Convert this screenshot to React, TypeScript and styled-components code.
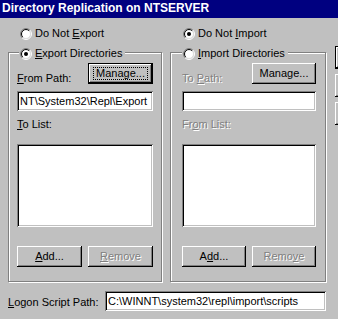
import React from "react";
import styled, { createGlobalStyle, css } from "styled-components";

const Global = createGlobalStyle`
  *, *::before, *::after { box-sizing: border-box; }
  html, body { margin: 0; padding: 0; background: #c0c0c0; overflow: hidden; }
  body {
    font-family: "Liberation Sans", Arial, sans-serif;
    font-size: 11px;
    color: #000;
  }
`;

const Window = styled.div`
  width: 338px;
  height: 319px;
  overflow: hidden;
  background: #c0c0c0;
  display: flex;
  flex-direction: column;
`;

const TitleBar = styled.div`
  flex: none;
  height: 18px;
  background: #000080;
  color: #fff;
  font-weight: bold;
  font-size: 12px;
  line-height: 17px;
  padding-left: 2px;
  white-space: nowrap;
`;

const Body = styled.div`
  display: flex;
  flex: 1;
  min-height: 0;
`;

const Main = styled.div`
  flex: none;
  width: 326px;
  padding-left: 8px;
  display: flex;
  flex-direction: column;
`;

const Columns = styled.div`
  display: flex;
  gap: 8px;
`;

const Column = styled.div<{ $w: number }>`
  width: ${(p) => p.$w}px;
  flex: none;
  display: flex;
  flex-direction: column;
  padding-top: 9px;
`;

const RadioRow = styled.div<{ $inset: number }>`
  display: flex;
  align-items: center;
  gap: 3px;
  height: 13px;
  line-height: 13px;
  padding-left: ${(p) => p.$inset}px;
  white-space: nowrap;
`;

const Group = styled.div<{ $pl: number; $pr: number }>`
  position: relative;
  margin-top: 12px;
  border: 1px solid #808080;
  box-shadow: inset 1px 1px 0 #fff, 1px 1px 0 #fff;
  padding: 10px ${(p) => p.$pr}px 14px ${(p) => p.$pl}px;
  display: flex;
  flex-direction: column;
`;

const Legend = styled.div<{ $left: number }>`
  position: absolute;
  top: -6px;
  left: ${(p) => p.$left}px;
  height: 13px;
  line-height: 13px;
  padding: 0 3px 0 1px;
  background: #c0c0c0;
  display: flex;
  align-items: center;
  gap: 3px;
  white-space: nowrap;
`;

const Pair = styled.div`
  display: grid;
  grid-template-columns: 1fr 1fr;
  column-gap: 6px;
`;

const TopRow = styled(Pair)`
  height: 21px;
`;

const Label = styled.div<{ $disabled?: boolean; $top?: number }>`
  line-height: 13px;
  white-space: nowrap;
  padding-top: ${(p) => p.$top ?? 0}px;
  ${(p) =>
    p.$disabled &&
    css`
      color: #808080;
      text-shadow: 1px 1px 0 #fff;
    `}
`;

const U = styled.span`
  text-decoration: underline;
  text-underline-offset: 1px;
`;

const Button = styled.button<{ $default?: boolean; $disabled?: boolean }>`
  position: relative;
  height: 21px;
  padding: 0;
  border: none;
  background: #c0c0c0;
  font-family: inherit;
  font-size: 11px;
  line-height: 13px;
  color: #000;
  white-space: nowrap;
  box-shadow: inset -1px -1px 0 #000, inset 1px 1px 0 #fff, inset -2px -2px 0 #808080;
  ${(p) =>
    p.$default &&
    css`
      box-shadow: inset 0 0 0 1px #000, inset -2px -2px 0 #000, inset 2px 2px 0 #fff,
        inset -3px -3px 0 #808080;
    `}
  ${(p) =>
    p.$disabled &&
    css`
      color: #808080;
      text-shadow: 1px 1px 0 #fff;
    `}
`;

const FocusButton = styled(Button)`
  &::after {
    content: "";
    position: absolute;
    inset: 4px 5px 4px 5px;
    border: 1px dotted #000;
  }
`;

const Field = styled.div<{ $h?: number }>`
  height: ${(p) => p.$h ?? 20}px;
  background: #fff;
  box-shadow: inset 1px 1px 0 #808080, inset -1px -1px 0 #fff, inset 2px 2px 0 #000,
    inset -2px -2px 0 #c0c0c0;
  padding: 0 3px;
  line-height: ${(p) => p.$h ?? 20}px;
  white-space: nowrap;
  overflow: hidden;
`;

const InputField = styled(Field)`
  margin-top: 7px;
`;

const ListBox = styled(Field)`
  margin-top: 13px;
  height: 83px;
`;

const ButtonRow = styled(Pair)`
  margin-top: 19px;
`;

const LogonRow = styled.div`
  margin-top: 9px;
  display: flex;
  align-items: center;
`;

const LogonLabel = styled.div`
  width: 97px;
  flex: none;
  line-height: 13px;
  padding-top: 2px;
  white-space: nowrap;
`;

const LogonField = styled(Field)`
  flex: 1;
`;

const SideButtons = styled.div`
  flex: none;
  margin-left: 9px;
  padding-top: 28px;
  display: flex;
  flex-direction: column;
  gap: 5px;
`;

const SideButton = styled(Button)`
  width: 75px;
  height: 23px;
  flex: none;
`;

function Radio({ checked }: { checked?: boolean }) {
  const r1 = 5.5;
  const r2 = 4.5;
  const d1 = r1 / Math.SQRT2;
  const d2 = r2 / Math.SQRT2;
  return (
    <svg width="12" height="12" viewBox="0 0 12 12" style={{ flex: "none" }}>
      <circle cx="6" cy="6" r="4.5" fill="#fff" />
      <path d={`M${6 - d1} ${6 + d1} A${r1} ${r1} 0 0 1 ${6 + d1} ${6 - d1}`} stroke="#808080" fill="none" />
      <path d={`M${6 + d1} ${6 - d1} A${r1} ${r1} 0 0 1 ${6 - d1} ${6 + d1}`} stroke="#fff" fill="none" />
      <path d={`M${6 - d2} ${6 + d2} A${r2} ${r2} 0 0 1 ${6 + d2} ${6 - d2}`} stroke="#000" fill="none" />
      <path d={`M${6 + d2} ${6 - d2} A${r2} ${r2} 0 0 1 ${6 - d2} ${6 + d2}`} stroke="#dfdfdf" fill="none" />
      {checked && <circle cx="6" cy="6" r="2" fill="#000" />}
    </svg>
  );
}

export default function App() {
  return (
    <>
      <Global />
      <Window>
        <TitleBar>Directory Replication on NTSERVER</TitleBar>
        <Body>
          <Main>
            <Columns>
              <Column $w={154}>
                <RadioRow $inset={12}>
                  <Radio />
                  <span>
                    Do Not <U>E</U>xport
                  </span>
                </RadioRow>
                <Group $pl={8} $pr={8}>
                  <Legend $left={10}>
                    <Radio checked />
                    <span>
                      <U>E</U>xport Directories
                    </span>
                  </Legend>
                  <TopRow>
                    <Label $top={9}>
                      <U>F</U>rom Path:
                    </Label>
                    <FocusButton $default>Manage...</FocusButton>
                  </TopRow>
                  <InputField>NT\System32\Repl\Export</InputField>
                  <Label $top={7}>
                    <U>T</U>o List:
                  </Label>
                  <ListBox />
                  <ButtonRow>
                    <Button>
                      <U>A</U>dd...
                    </Button>
                    <Button $disabled>
                      <U>R</U>emove
                    </Button>
                  </ButtonRow>
                </Group>
              </Column>
              <Column $w={156}>
                <RadioRow $inset={13}>
                  <Radio checked />
                  <span>
                    Do Not <U>I</U>mport
                  </span>
                </RadioRow>
                <Group $pl={11} $pr={9}>
                  <Legend $left={11}>
                    <Radio />
                    <span>
                      <U>I</U>mport Directories
                    </span>
                  </Legend>
                  <TopRow>
                    <Label $top={9} $disabled>
                      To <U>P</U>ath:
                    </Label>
                    <Button>Manage...</Button>
                  </TopRow>
                  <InputField />
                  <Label $top={7} $disabled>
                    Fr<U>o</U>m List:
                  </Label>
                  <ListBox />
                  <ButtonRow>
                    <Button>
                      A<U>d</U>d...
                    </Button>
                    <Button $disabled>
                      Remo<U>v</U>e
                    </Button>
                  </ButtonRow>
                </Group>
              </Column>
            </Columns>
            <LogonRow>
              <LogonLabel>
                <U>L</U>ogon Script Path:
              </LogonLabel>
              <LogonField>C:\WINNT\system32\repl\import\scripts</LogonField>
            </LogonRow>
          </Main>
          <SideButtons>
            <SideButton $default aria-label="OK" />
            <SideButton aria-label="Cancel" />
            <SideButton aria-label="Help" />
          </SideButtons>
        </Body>
      </Window>
    </>
  );
}
